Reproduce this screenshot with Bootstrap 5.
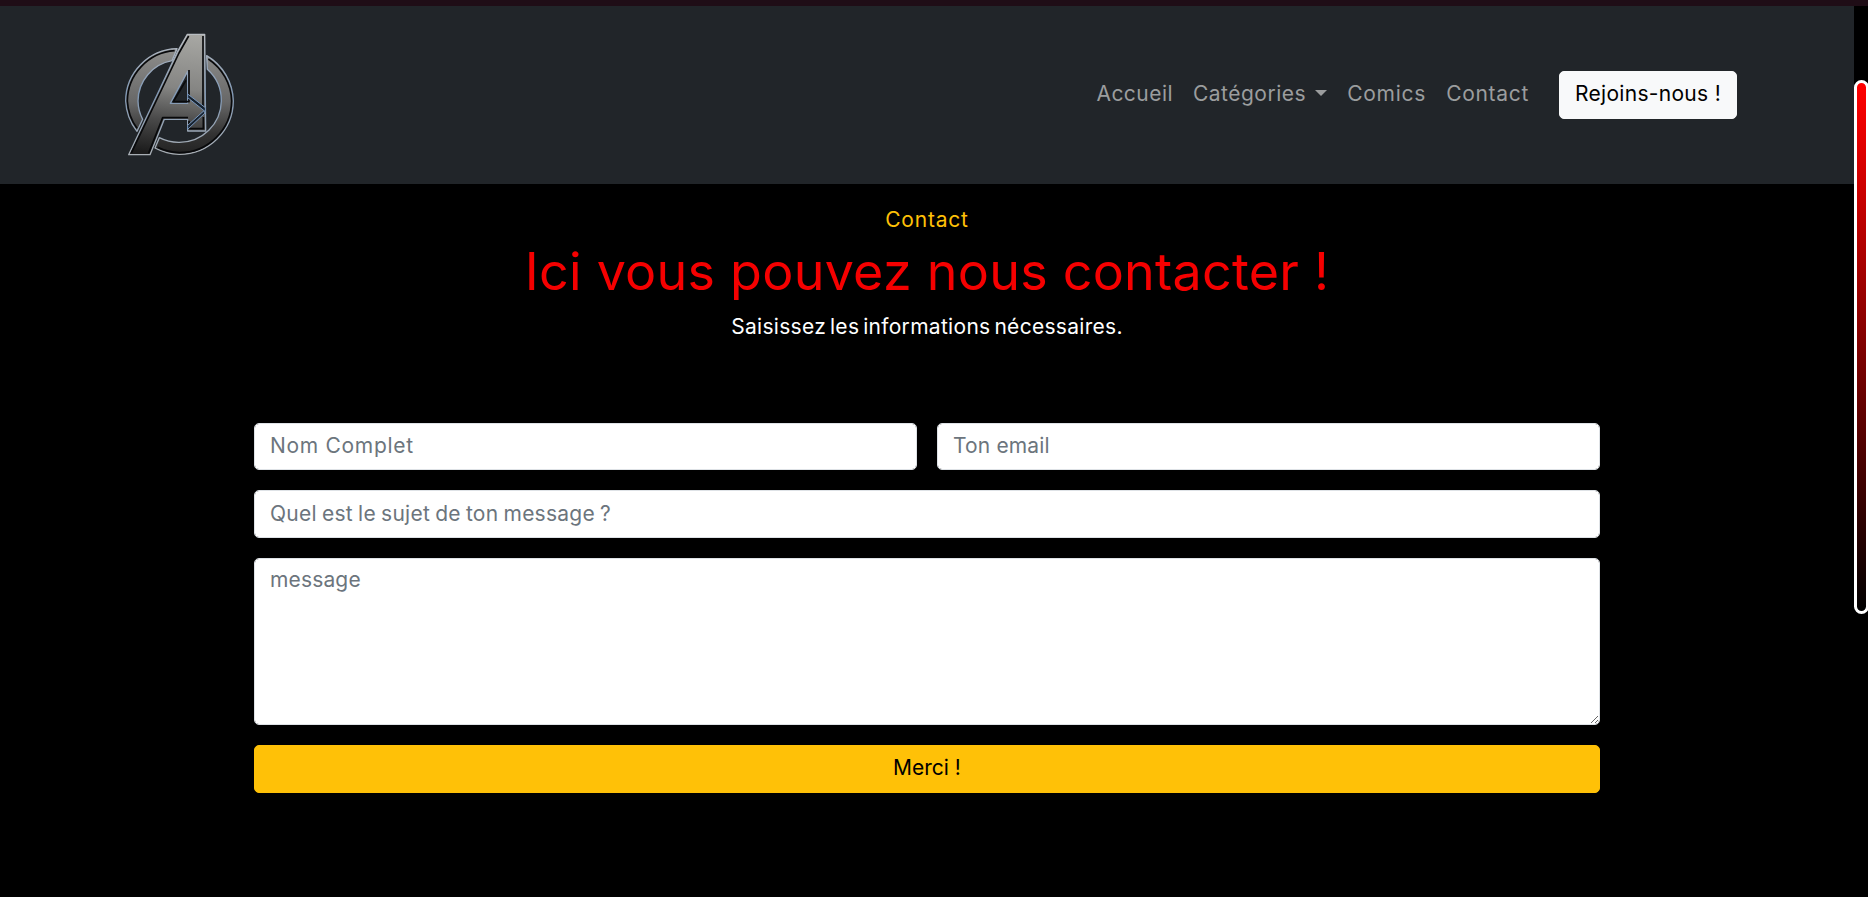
<!DOCTYPE html>
<html lang="fr">
<head>
<meta charset="utf-8">
<meta name="viewport" content="width=device-width, initial-scale=1">
<title>Contact</title>
<link href="https://cdn.jsdelivr.net/npm/bootstrap@5.3.0/dist/css/bootstrap.min.css" rel="stylesheet">
<style>
html{font-size:20px}
body{font-family:Inter,"Liberation Sans",sans-serif;background:#000;height:897px;overflow:hidden;font-weight:400}
.top-strip{height:6px;background:#1f0d16}
.page-row{height:891px}
.site-nav{height:178px;background:#212529}
.wide{width:1650px;max-width:none;padding:0 15px}
.site-nav .nav-link{padding:7px 10px 9px;color:#9b9d9e;font-size:21px;line-height:30px;letter-spacing:.7px}
.site-nav .nav-home{letter-spacing:.45px}
.site-nav .nav-cat{letter-spacing:.5px}
.site-nav .nav-comics{letter-spacing:.75px}
.dropdown-toggle::after{margin-left:9px;border-top-width:6px;border-left-width:6px;border-right-width:6px}
.join-btn{margin-left:20px;width:178px;height:48px;padding:0;font-size:21px;line-height:44px;border-radius:5px;color:#000;white-space:nowrap;letter-spacing:.3px}
.eyebrow{padding-top:21px;font-size:21px;line-height:30px;letter-spacing:.8px}
.headline{font-size:52px;line-height:60px;color:#f50000;font-weight:400;margin:7px 0 10px;letter-spacing:.25px}
.intro{font-size:21px;line-height:30px;letter-spacing:.3px;word-spacing:-2.3px}
.form-box{margin-top:81px;width:1346px}
.form-box .form-control{height:48px;border-radius:5px;padding:7px 15px 9px;color:#212529;font-size:21px;line-height:30px;letter-spacing:.15px}
.form-box .form-control::placeholder{color:#6c757d}
.form-box .name-field{height:47px;padding:6px 15px 9px;letter-spacing:.7px}
.form-box .mail-field{height:47px;padding:6px 15px 9px}
.form-box .subject-field{letter-spacing:.25px;word-spacing:-1px}
.form-box textarea.form-control{height:167px;padding-top:6px}
.send-btn{height:48px;border-radius:5px;padding:0 0 2px;font-size:21px;line-height:30px}
.scroll-rail{width:14px;padding-top:74px;overflow:hidden}
.scroll-thumb{width:15px;height:534px;border:3px solid #fff;border-radius:8px;background:linear-gradient(red,#000)}
</style>
</head>
<body>
<div class="top-strip"></div>
<div class="page-row d-flex">
<div class="flex-grow-1">
<nav class="navbar navbar-expand navbar-dark site-nav p-0">
<div class="container wide">
<a class="navbar-brand p-0 m-0" href="#" aria-label="Accueil">
<svg class="d-block" width="133" height="150" viewBox="21 0 399 450">
<defs>
<linearGradient id="steel" gradientUnits="userSpaceOnUse" x1="230" y1="40" x2="190" y2="405"><stop offset="0" stop-color="#a8a8a4"/><stop offset=".45" stop-color="#858583"/><stop offset=".72" stop-color="#4a4a4a"/><stop offset="1" stop-color="#1c1c1c"/></linearGradient>
<linearGradient id="ring" gradientUnits="userSpaceOnUse" x1="0" y1="85" x2="0" y2="405"><stop offset="0" stop-color="#8e8e8c"/><stop offset=".5" stop-color="#686868"/><stop offset=".8" stop-color="#333"/><stop offset="1" stop-color="#222"/></linearGradient>
<linearGradient id="edge" gradientUnits="userSpaceOnUse" x1="0" y1="40" x2="0" y2="405"><stop offset="0" stop-color="#b9bdc2"/><stop offset=".5" stop-color="#8098b5"/><stop offset="1" stop-color="#a9afb5"/></linearGradient>
</defs>
<g stroke-linejoin="round">
<g fill="url(#ring)" stroke="url(#edge)" stroke-width="4">
<path d="M201 86A158 158 0 0 0 47 243A158 158 0 0 0 81 334L98 298A124 124 0 0 1 84 243A124 124 0 0 1 186 122Z"/>
<path d="M290 107A162 162 0 0 1 370 243A162 162 0 0 1 208 403A162 162 0 0 1 135 384L148 353A126 126 0 0 0 208 367A126 126 0 0 0 334 243A126 126 0 0 0 292 148Z"/>
</g>
<g fill="none" stroke="#08090b" stroke-width="5">
<path d="M194 92A153 153 0 0 0 52 243A153 153 0 0 0 81 325"/>
<path d="M365 243A157 157 0 0 1 208 398A157 157 0 0 1 143 382M295 117A157 157 0 0 1 365 243"/>
</g>
<path d="M232 43H284L287 333H233V298H163L120 404H56L203 94ZM233 154L181 250H233Z" fill="url(#steel)" fill-rule="evenodd" stroke="url(#edge)" stroke-width="4"/>
<path d="M236 48L207 99L64 399M279 48V262M237 302V326H280V291M234 293H158L116 399M228 181L190 245H237V150" fill="none" stroke="#08090b" stroke-width="5"/>
<path d="M233 222L286 263V275L233 233ZM285 279L233 328V316L281 273Z" fill="#17222f" stroke="#7897bd" stroke-width="3"/>
</g>
</svg>
</a>
<div class="navbar-nav ms-auto align-items-center">
<a class="nav-link nav-home" href="#">Accueil</a>
<a class="nav-link nav-cat dropdown-toggle" href="#">Catégories</a>
<a class="nav-link nav-comics" href="#">Comics</a>
<a class="nav-link" href="#">Contact</a>
<a class="btn btn-light join-btn" href="#">Rejoins-nous !</a>
</div>
</div>
</nav>
<main class="text-center text-white">
<div class="eyebrow text-warning">Contact</div>
<h2 class="headline">Ici vous pouvez nous contacter !</h2>
<div class="intro">Saisissez les informations nécessaires.</div>
<form class="form-box mx-auto d-grid gap-3">
<div class="row g-3">
<div class="col-6"><input class="form-control name-field" placeholder="Nom Complet" aria-label="Nom Complet"></div>
<div class="col-6"><input class="form-control mail-field" type="email" placeholder="Ton email" aria-label="Ton email"></div>
</div>
<input class="form-control subject-field" placeholder="Quel est le sujet de ton message ?" aria-label="Sujet">
<textarea class="form-control" placeholder="message" aria-label="Message"></textarea>
<button class="btn btn-warning send-btn" type="button">Merci !</button>
</form>
</main>
</div>
<div class="scroll-rail flex-shrink-0"><div class="scroll-thumb"></div></div>
</div>
<script src="https://cdn.jsdelivr.net/npm/bootstrap@5.3.0/dist/js/bootstrap.bundle.min.js"></script>
</body>
</html>
